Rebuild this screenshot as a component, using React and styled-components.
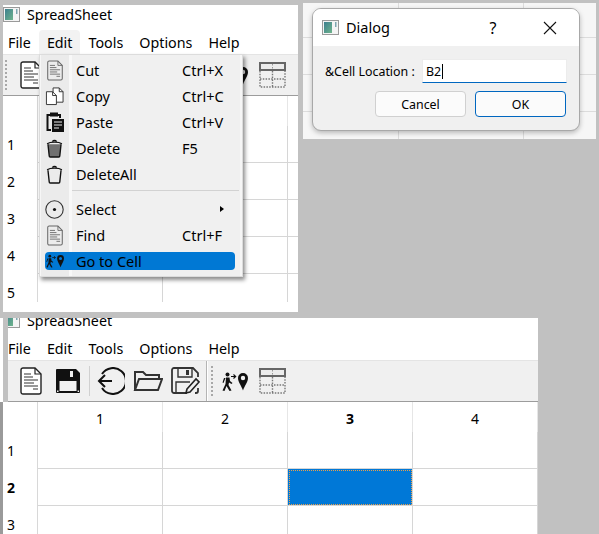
import React from 'react'
import styled, { createGlobalStyle } from 'styled-components'

const GlobalStyle = createGlobalStyle`
  html, body { margin: 0; padding: 0; background: #c1c1c1; }
  body { font-family: "Noto Sans", "Open Sans", sans-serif; color: #000; }
`

const Page = styled.div`
  width: 599px;
  height: 534px;
  overflow: hidden;
  background: #c1c1c1;
`
const TopRow = styled.div`
  display: flex;
  align-items: flex-start;
  height: 312px;
`
const TopWindow = styled.div`
  position: relative;
  width: 295px;
  height: 307px;
  margin: 5px 0 0 3px;
  background: #fff;
`
const BottomWindow = styled.div`
  width: 538px;
  height: 216px;
  margin-top: 6px;
  background: #fff;
  overflow: hidden;
`
const ChromeClip = styled.div`
  height: 84px;
  margin-left: 3px;
  border-left: 5px solid #c1c1c1;
  overflow: hidden;
`
const ClippedInner = styled.div`
  margin: -7px 0 0 -5px;
`
const SheetEdge = styled.div`
  border-left: 3px solid #9a9a9a;
`

/* window chrome */
const TitleBar = styled.div`
  display: flex;
  align-items: center;
  gap: 7px;
  height: 25px;
  padding-bottom: 6px;
  box-sizing: border-box;
  font-size: 14.3px;
  background: #fff;
`
const MenuBar = styled.div`
  display: flex;
  height: 24px;
  font-size: 14.3px;
  background: #fff;
`
const MenuTitle = styled.div`
  display: flex;
  align-items: center;
  padding: 0 8px;
  border-radius: 4px 4px 0 0;
  background: ${(p) => (p.$open ? '#f2f2f2' : 'transparent')};
  &:first-child {
    padding-left: 5px;
  }
`
const Toolbar = styled.div`
  display: flex;
  align-items: center;
  height: 42px;
  box-sizing: border-box;
  padding-left: 2px;
  background: #f0f0f0;
  border-top: 1px solid #e4e4e4;
  border-bottom: 1px solid #9c9c9c;
`
const Grip = styled.div`
  width: 2px;
  height: 30px;
  margin: ${(p) => p.$margin};
  flex: none;
  background: repeating-linear-gradient(to bottom, #a8a8a8 0 2px, transparent 2px 4px);
`
const ToolSlot = styled.div`
  display: flex;
  align-items: center;
  justify-content: center;
  width: 37.5px;
  flex: none;
`
const ToolSep = styled.div`
  width: 1px;
  height: 30px;
  margin: 0 2px;
  flex: none;
  background: #d0d0d0;
`
const ToolDivider = styled.div`
  width: 1px;
  height: 40px;
  margin-left: 1px;
  flex: none;
  background: #b4b4b4;
  border-right: 1px solid #fff;
`

/* sheet */
const SheetClip = styled.div`
  height: ${(p) => p.$height}px;
  overflow: hidden;
`
const SheetGrid = styled.div`
  display: grid;
  grid-template-columns: 35px repeat(${(p) => p.$cols}, 125px);
  grid-template-rows: 30px;
  grid-auto-rows: 37px;
  font-size: 14px;
`
const ColHead = styled.div`
  display: flex;
  align-items: center;
  justify-content: center;
  padding-top: 2px;
  border-right: 1px solid #e6e6e6;
  font-weight: ${(p) => (p.$bold ? 700 : 400)};
`
const RowHead = styled.div`
  display: flex;
  align-items: center;
  padding-left: 4px;
  border-right: 1px solid #d8d8d8;
  font-weight: ${(p) => (p.$bold ? 700 : 400)};
`
const Cell = styled.div`
  box-sizing: border-box;
  border-right: 1px solid #d6d6d6;
  border-bottom: 1px solid #d6d6d6;
  background-clip: padding-box;
  background-color: ${(p) => (p.$selected ? '#0078d7' : '#fff')};
  outline: ${(p) => (p.$selected ? '1px dotted #e8a04c' : 'none')};
  outline-offset: -2px;
`

/* edit menu */
const Menu = styled.div`
  position: absolute;
  left: 36px;
  top: 49px;
  display: flex;
  flex-direction: column;
  width: 204px;
  height: 223px;
  box-sizing: border-box;
  padding-top: 2px;
  border: 1px solid #dcdcdc;
  font-size: 14.5px;
  background: linear-gradient(to right, #f6f6f6 0 1px, #ebebeb 1px 29px, #f8f8f8 29px 32px, #f0f0f0 32px 200px, #f6f6f6 200px);
  box-shadow: 2px 3px 4px rgba(0, 0, 0, 0.45);
`
const MenuRow = styled.div`
  display: flex;
  align-items: center;
  height: 18px;
  flex: none;
  margin: 4px 7px 4px 5px;
  border-radius: 4px;
  background: ${(p) => (p.$active ? '#0078d4' : 'transparent')};
`
const MenuIconSlot = styled.div`
  display: flex;
  align-items: center;
  justify-content: center;
  width: 19px;
  height: 18px;
  flex: none;
`
const MenuLabel = styled.div`
  width: 106px;
  margin-left: 12px;
  flex: none;
`
const SubArrow = styled.div`
  width: 0;
  height: 0;
  margin-left: 38px;
  border-left: 4px solid #000;
  border-top: 3.5px solid transparent;
  border-bottom: 3.5px solid transparent;
`
const MenuSep = styled.div`
  height: 1px;
  flex: none;
  margin: 3px 3px 5px 32px;
  background: #d2d2d2;
`

/* dialog */
const Backdrop = styled.div`
  width: 293px;
  height: 136px;
  margin: 3px 0 0 5px;
  box-sizing: border-box;
  padding: 5px 0 0 9px;
  background-color: #f6f6f6;
  background-image:
    linear-gradient(to right, #dcdcdc 1px, transparent 1px),
    linear-gradient(to bottom, #dcdcdc 1px, transparent 1px);
  background-size: 125px 37px;
  background-position: 95px 34px;
`
const Dialog = styled.div`
  width: 268px;
  height: 123px;
  box-sizing: border-box;
  border: 1px solid #a8a8a8;
  border-radius: 9px;
  overflow: hidden;
  background: #f0f0f0;
  box-shadow: 0 2px 5px rgba(0, 0, 0, 0.25);
`
const DialogTitle = styled.div`
  display: flex;
  align-items: center;
  height: 37px;
  box-sizing: border-box;
  padding: 0 0 0 9px;
  font-size: 14.5px;
  background: #fff;
`
const DialogName = styled.div`
  margin: -2px 0 0 7px;
  flex: 1;
`
const TitleButton = styled.div`
  display: flex;
  justify-content: center;
  width: 20px;
  margin-right: ${(p) => p.$right}px;
  font-size: 16px;
`
const DialogBody = styled.div`
  padding: 13px 12px 0 12px;
`
const FieldRow = styled.div`
  display: flex;
  align-items: center;
  justify-content: space-between;
  font-size: 12.4px;
`
const FieldValue = styled.div`
  display: flex;
  align-items: center;
  width: 145px;
  height: 24px;
  box-sizing: border-box;
  padding-left: 3px;
  background: #fff;
  border: 1px solid #ececec;
  border-bottom: 1.5px solid #0067c0;
`
const Caret = styled.span`
  width: 1px;
  height: 15px;
  margin-left: 1px;
  background: #000;
`
const ButtonRow = styled.div`
  display: flex;
  justify-content: flex-end;
  gap: 9px;
  margin: 8px 1px 0 0;
`
const DialogButton = styled.button`
  width: 91px;
  height: 26px;
  padding: 0;
  font: 12.4px "Noto Sans", sans-serif;
  color: #000;
  background: #fbfbfb;
  border: 1px solid ${(p) => (p.$primary ? '#0067c0' : '#d0d0d0')};
  border-radius: 4px;
`

/* icons */
const AppIcon = () => (
  <svg width="17" height="15" viewBox="0 0 17 15">
    <defs>
      <linearGradient id="appfill" x1="0" y1="0" x2="1" y2="1">
        <stop offset="0" stopColor="#3d7f8f" />
        <stop offset="1" stopColor="#6fb48c" />
      </linearGradient>
    </defs>
    <rect x="0.5" y="0.5" width="16" height="14" fill="#f4f4f4" stroke="#9a9a9a" />
    <rect x="2" y="2" width="8" height="11" fill="url(#appfill)" />
    <rect x="13" y="2" width="1.5" height="5" fill="#7fa6b0" />
  </svg>
)

const DocIcon = ({ w = 22, h = 28, stroke = '#222', fill = '#fff', line = '#333' }) => (
  <svg width={w} height={h} viewBox="0 0 22 28">
    <path d="M3 1H15L21 7V25A2 2 0 0 1 19 27H3A2 2 0 0 1 1 25V3A2 2 0 0 1 3 1Z" fill={fill} stroke={stroke} strokeWidth="1.4" />
    <path d="M15 1V7H21" fill="none" stroke={stroke} strokeWidth="1.2" />
    <path d="M4 7H11M4 10H13M4 13H18M4 16H14M4 19H18M13 22H18" stroke={line} strokeWidth="1.2" />
  </svg>
)

const SaveIcon = () => (
  <svg width="26" height="26" viewBox="0 0 26 26">
    <path d="M2 1H21L25 5V24A1 1 0 0 1 24 25H2A1 1 0 0 1 1 24V2A1 1 0 0 1 2 1Z" fill="#111" />
    <rect x="15" y="3" width="3" height="6" fill="#f0f0f0" />
    <rect x="4.5" y="13" width="17" height="10" fill="#f0f0f0" />
    <rect x="2" y="22.5" width="1.5" height="1.5" fill="#f0f0f0" />
    <rect x="22.6" y="22.5" width="1.5" height="1.5" fill="#f0f0f0" />
  </svg>
)

const BackIcon = () => (
  <svg width="28" height="28" viewBox="0 0 28 28" fill="none" stroke="#111" strokeWidth="2">
    <path d="M5 7A13 13 0 1 1 5 21" />
    <path d="M15 14H2M8 8L2 14L8 20" />
  </svg>
)

const FolderIcon = () => (
  <svg width="30" height="22" viewBox="0 0 30 22" fill="none" stroke="#333" strokeWidth="2">
    <path d="M2 20V2H10L13 5H26V9" />
    <path d="M2 20L6 9H29L25 20Z" />
  </svg>
)

const SaveAsIcon = () => (
  <svg width="29" height="28" viewBox="0 0 29 28">
    <path d="M16 26H3A2 2 0 0 1 1 24V3A2 2 0 0 1 3 1H22L27 6V10M27 21V24A2 2 0 0 1 25 26H24" fill="none" stroke="#333" strokeWidth="1.8" />
    <path d="M7 1V10H21V1" fill="none" stroke="#333" strokeWidth="1.4" />
    <rect x="15" y="3" width="3" height="5" fill="#333" />
    <path d="M5 26V15H19" fill="none" stroke="#333" strokeWidth="1.4" />
    <path d="M16 22L25 12L28 15L19 25L15 26Z" fill="#f0f0f0" stroke="#222" strokeWidth="1.6" />
  </svg>
)

const GoToIcon = ({ w = 26, h = 19 }) => (
  <svg width={w} height={h} viewBox="0 0 26 19">
    <circle cx="5.5" cy="2.5" r="2" fill="#111" />
    <path d="M4 5.5L7.5 5.5L8 9L10.5 11L9.5 12L7 10.5L6.5 13L9.5 18.5L7.5 19L4.5 14L2.5 19L0.5 18.5L3.5 12ZM3.5 6L1.5 11L0.5 10.5L2 6Z" fill="#111" />
    <path d="M9 4.5H13.5M11.5 2.5L13.7 4.5L11.5 6.5" fill="none" stroke="#111" strokeWidth="1.1" />
    <path fillRule="evenodd" d="M21 1A5 5 0 0 1 26 6C26 10 22.5 14 21 18.5C19.5 14 16 10 16 6A5 5 0 0 1 21 1ZM21 3.8A2.2 2.2 0 1 0 21 8.2A2.2 2.2 0 1 0 21 3.8Z" fill="#111" />
  </svg>
)

const TableIcon = () => (
  <svg width="27" height="26" viewBox="0 0 27 26" fill="none">
    <rect x="1" y="1" width="25" height="7" fill="#ececec" stroke="#666" strokeWidth="2" />
    <path d="M13.5 2V8" stroke="#999" strokeWidth="1" strokeDasharray="1.5 1.5" />
    <path d="M1 9V25H26V9M1 17H26M13.5 9V25" stroke="#777" strokeWidth="1.4" strokeDasharray="1.5 1.3" />
  </svg>
)

const CopyIcon = () => (
  <svg width="20" height="20" viewBox="0 0 20 20" fill="#fff" stroke="#333" strokeWidth="1">
    <path d="M8.5 1.5H15L19 5.5V16.5H8.5Z" />
    <path d="M15 1.5V5.5H19" fill="none" />
    <path d="M1.5 5.5H8L12 9.5V19H1.5Z" />
    <path d="M8 5.5V9.5H12" fill="none" />
  </svg>
)

const PasteIcon = () => (
  <svg width="18" height="20" viewBox="0 0 18 20">
    <path d="M5 3H1.5V18H5M11 3H14V6" fill="none" stroke="#111" strokeWidth="2" />
    <rect x="4" y="0.5" width="8" height="4" fill="#111" />
    <rect x="6" y="7" width="12" height="13" fill="#111" />
    <path d="M8 10H16M8 13H16M8 16H13" stroke="#eee" strokeWidth="1" />
  </svg>
)

const TrashIcon = ({ fill = 'none' }) => (
  <svg width="17" height="19" viewBox="0 0 16 18" fill={fill} stroke="#111" strokeWidth="1.3">
    <path d="M1.8 5L3 16A1 1 0 0 0 4 17H12A1 1 0 0 0 13 16L14.2 5" />
    <path d="M1 4.5C4 2.5 12 2.5 15 4.5" fill="none" />
    <path d="M6 2.5C7 1 9 1 10 2.5" fill="none" />
  </svg>
)

const SelectIcon = () => (
  <svg width="19" height="19" viewBox="0 0 19 19">
    <circle cx="9.5" cy="9.5" r="8.7" fill="none" stroke="#333" strokeWidth="1.1" />
    <circle cx="9.5" cy="9.5" r="1.6" fill="#111" />
  </svg>
)

/* one window's title, menu and toolbar */
const WindowChrome = ({ openMenu }) => (
  <>
    <TitleBar>
      <AppIcon />
      <span>SpreadSheet</span>
    </TitleBar>
    <MenuBar>
      {['File', 'Edit', 'Tools', 'Options', 'Help'].map((name) => (
        <MenuTitle key={name} $open={name === openMenu}>{name}</MenuTitle>
      ))}
    </MenuBar>
    <Toolbar>
      <Grip $margin="0 5px 0 0" />
      <ToolSlot><DocIcon /></ToolSlot>
      <ToolSlot><SaveIcon /></ToolSlot>
      <ToolSep />
      <ToolSlot><BackIcon /></ToolSlot>
      <ToolSlot><FolderIcon /></ToolSlot>
      <ToolSlot><SaveAsIcon /></ToolSlot>
      <ToolDivider />
      <Grip $margin="0 4px 0 3px" />
      <ToolSlot><GoToIcon /></ToolSlot>
      <ToolSlot><TableIcon /></ToolSlot>
    </Toolbar>
  </>
)

const Sheet = ({ cols, rows, height, currentRow, currentCol, labels = true }) => (
  <SheetClip $height={height}>
    <SheetGrid $cols={cols}>
      <RowHead />
      {Array.from({ length: cols }, (_, c) => (
        <ColHead key={c} $bold={c + 1 === currentCol}>{labels ? c + 1 : ''}</ColHead>
      ))}
      {Array.from({ length: rows }, (_, r) => (
        <React.Fragment key={r}>
          <RowHead $bold={r + 1 === currentRow}>{r + 1}</RowHead>
          {Array.from({ length: cols }, (_, c) => (
            <Cell key={c} $selected={r + 1 === currentRow && c + 1 === currentCol} />
          ))}
        </React.Fragment>
      ))}
    </SheetGrid>
  </SheetClip>
)

const grayDoc = { w: 16, h: 21, stroke: '#666', fill: '#ececec', line: '#666' }

const EditMenu = () => (
  <Menu>
    <MenuRow><MenuIconSlot><DocIcon {...grayDoc} /></MenuIconSlot><MenuLabel>Cut</MenuLabel><span>Ctrl+X</span></MenuRow>
    <MenuRow><MenuIconSlot><CopyIcon /></MenuIconSlot><MenuLabel>Copy</MenuLabel><span>Ctrl+C</span></MenuRow>
    <MenuRow><MenuIconSlot><PasteIcon /></MenuIconSlot><MenuLabel>Paste</MenuLabel><span>Ctrl+V</span></MenuRow>
    <MenuRow><MenuIconSlot><TrashIcon fill="#707070" /></MenuIconSlot><MenuLabel>Delete</MenuLabel><span>F5</span></MenuRow>
    <MenuRow><MenuIconSlot><TrashIcon /></MenuIconSlot><MenuLabel>DeleteAll</MenuLabel></MenuRow>
    <MenuSep />
    <MenuRow><MenuIconSlot><SelectIcon /></MenuIconSlot><MenuLabel>Select</MenuLabel><SubArrow /></MenuRow>
    <MenuRow><MenuIconSlot><DocIcon {...grayDoc} /></MenuIconSlot><MenuLabel>Find</MenuLabel><span>Ctrl+F</span></MenuRow>
    <MenuRow $active><MenuIconSlot><GoToIcon w={18} h={14} /></MenuIconSlot><MenuLabel>Go to Cell</MenuLabel></MenuRow>
  </Menu>
)

export default function App() {
  return (
    <Page>
      <GlobalStyle />
      <TopRow>
        <TopWindow>
          <WindowChrome openMenu="Edit" />
          <Sheet cols={3} rows={5} height={206} labels={false} />
          <EditMenu />
        </TopWindow>
        <Backdrop>
          <Dialog>
            <DialogTitle>
              <AppIcon />
              <DialogName>Dialog</DialogName>
              <TitleButton $right={37}>?</TitleButton>
              <TitleButton $right={19}>
                <svg width="14" height="14" viewBox="0 0 14 14" stroke="#111" strokeWidth="1.1">
                  <path d="M1 1L13 13M13 1L1 13" />
                </svg>
              </TitleButton>
            </DialogTitle>
            <DialogBody>
              <FieldRow>
                <span>&amp;Cell Location :</span>
                <FieldValue>B2<Caret /></FieldValue>
              </FieldRow>
              <ButtonRow>
                <DialogButton>Cancel</DialogButton>
                <DialogButton $primary>OK</DialogButton>
              </ButtonRow>
            </DialogBody>
          </Dialog>
        </Backdrop>
      </TopRow>
      <BottomWindow>
        <ChromeClip>
          <ClippedInner>
            <WindowChrome />
          </ClippedInner>
        </ChromeClip>
        <SheetEdge>
          <Sheet cols={4} rows={3} height={132} currentRow={2} currentCol={3} />
        </SheetEdge>
      </BottomWindow>
    </Page>
  )
}
